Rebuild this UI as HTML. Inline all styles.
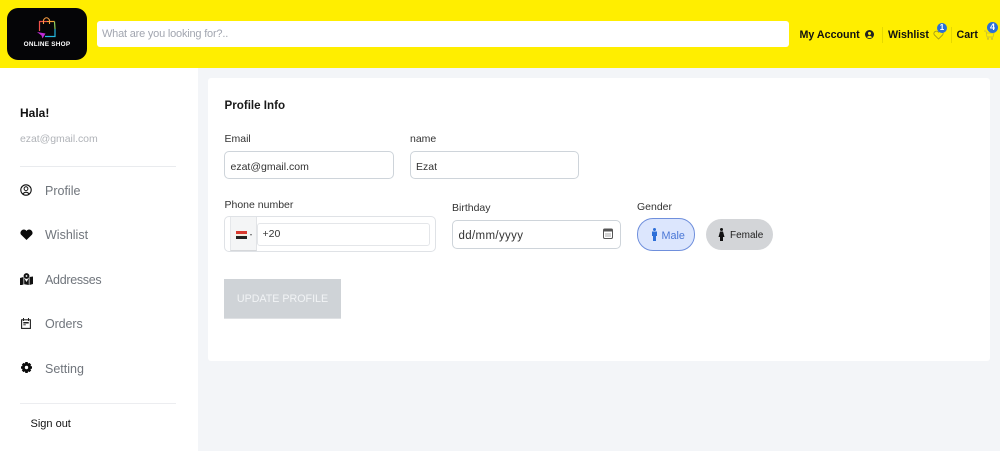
<!DOCTYPE html>
<html>
<head>
<meta charset="utf-8">
<style>
html,body{margin:0;padding:0;background:#fff}
body{width:1000px;height:467px;position:relative;overflow:hidden;font-family:"Liberation Sans",sans-serif;color:#111}
.a{position:absolute;white-space:nowrap}
.box{position:absolute;box-sizing:border-box;background:#fff;border:1px solid #ced4da;border-radius:5px}
.lbl{font-size:10.5px;color:#333;line-height:14px}
.val{font-size:10.5px;color:#333;line-height:14px}
.nav{font-size:12.5px;color:#70757c;line-height:16px;left:45px}
.hd{font-size:10.7px;font-weight:bold;line-height:14px;color:#111}
svg{position:absolute;display:block}
</style>
</head>
<body>
<div class="a" style="left:0;top:0;width:1000px;height:68px;background:#ffee00"></div>
<div class="a" style="left:198px;top:68px;width:802px;height:383px;background:#f3f5f8"></div>

<!-- logo -->
<div class="a" style="left:7px;top:8px;width:80px;height:52px;background:#050507;border-radius:11px"></div>
<svg style="left:34px;top:15px" width="28" height="25" viewBox="0 0 28 25" fill="none">
  <path d="M5.500 16V6.500H13" stroke="#f0504a" stroke-width="1.200"/>
  <path d="M13 6.500H20.500" stroke="#f3a13a" stroke-width="1.200"/>
  <path d="M20.500 6.500L21 14" stroke="#8fcf5a" stroke-width="1.200"/>
  <path d="M21 14V21.500H11" stroke="#25b8e0" stroke-width="1.200"/>
  <path d="M9.500 9V5Q12.500 .5 15.500 5V9" stroke="#f59b42" stroke-width="1.100"/>
  <path d="M3 17L11.500 18.500L8.500 23.500L7.500 20.500Z" fill="#c02bd6"/>
</svg>
<div class="a" style="left:7px;top:40.500px;width:80px;text-align:center;color:#fff;font-size:6.400px;font-weight:bold;letter-spacing:.25px;line-height:8px">ONLINE SHOP</div>

<!-- search -->
<div class="a" style="left:97px;top:21px;width:692px;height:26px;background:#fff;border-radius:3px"></div>
<div class="a" style="left:102px;top:27px;font-size:11px;letter-spacing:-.2px;line-height:15px;color:#a2a6b0">What are you looking for?..</div>

<!-- header right -->
<div class="a hd" style="left:799.500px;top:27.500px">My Account</div>
<svg style="left:865px;top:29.500px" width="9" height="9" viewBox="0 0 10 10"><circle cx="5" cy="5" r="5" fill="#222"/><circle cx="5" cy="3.800" r="1.700" fill="#ffee00"/><path d="M2 8Q5 4.800 8 8Q5 10 2 8Z" fill="#ffee00"/></svg>
<div class="a" style="left:881.500px;top:27px;width:1px;height:16px;background:#e6d800"></div>
<div class="a hd" style="left:888px;top:27.500px">Wishlist</div>
<svg style="left:933px;top:30px" width="11" height="10" viewBox="0 0 11 10" fill="none"><path d="M5.500 9L1.300 4.800C-.5 2.500 3.500-.5 5.500 2.300C7.500-.5 11.500 2.500 9.700 4.800Z" stroke="#9c9420" stroke-width=".8"/></svg>
<div class="a" style="left:937px;top:23px;width:10px;height:10px;border-radius:50%;background:#2a6fd6;color:#fff;font-size:8px;font-weight:bold;text-align:center;line-height:10px">1</div>
<div class="a" style="left:950.500px;top:27px;width:1px;height:16px;background:#e6d800"></div>
<div class="a hd" style="left:956.500px;top:27.500px">Cart</div>
<svg style="left:984px;top:30px" width="11" height="10" viewBox="0 0 11 10" fill="none" stroke="#c2ba3a" stroke-width=".7"><path d="M0 1H2L3 7H9L10 3H2.500"/><circle cx="4" cy="8.700" r=".7"/><circle cx="8" cy="8.700" r=".7"/></svg>
<div class="a" style="left:987px;top:22px;width:11px;height:11px;border-radius:50%;background:#2a6fd6;color:#fff;font-size:9px;font-weight:bold;text-align:center;line-height:11px">4</div>

<!-- sidebar -->
<div class="a" style="left:20px;top:105px;font-size:12px;font-weight:bold;line-height:16px;color:#111">Hala!</div>
<div class="a" style="left:20px;top:132px;font-size:10.500px;letter-spacing:-.05px;line-height:15px;color:#b0b3b8">ezat@gmail.com</div>
<div class="a" style="left:20px;top:166px;width:156px;height:1px;background:#e9ebee"></div>

<svg style="left:20px;top:184px" width="12" height="12" viewBox="0 0 12 12" fill="none"><circle cx="6" cy="6" r="5.200" stroke="#111" stroke-width="1.100"/><circle cx="6" cy="4.700" r="1.900" stroke="#111" stroke-width="1"/><path d="M2.800 9.800Q6 6.600 9.200 9.800" stroke="#111" stroke-width="1.100"/></svg>
<div class="a nav" style="top:182.500px">Profile</div>

<svg style="left:20px;top:228.500px" width="13" height="11" viewBox="0 0 13 11"><path d="M6.500 11L1 5.600C-1.200 2.500 3.800-1.800 6.500 2C9.200-1.800 14.200 2.500 12 5.600Z" fill="#0a0a0a"/></svg>
<div class="a nav" style="top:227px">Wishlist</div>

<svg style="left:20px;top:273px" width="13" height="12" viewBox="0 0 13 12"><path d="M0 5L3.500 4V11.500L0 12.500ZM4.200 5L6.500 9L8.800 5V12L4.200 11.200ZM9.500 4L13 3.500V11L9.500 12Z" fill="#111"/><circle cx="6.500" cy="3" r="2.900" fill="#111"/><circle cx="6.500" cy="3" r=".9" fill="#fff"/></svg>
<div class="a nav" style="top:271.500px;letter-spacing:-.3px">Addresses</div>

<svg style="left:21px;top:318px" width="10" height="11" viewBox="0 0 10 11" fill="none"><rect x=".6" y="1.800" width="8.800" height="8.600" stroke="#222" stroke-width="1.100"/><path d="M2.500 0V3M7.500 0V3" stroke="#222" stroke-width="1"/><rect x="2.300" y="4" width="5.400" height="1.500" fill="#222"/><rect x="2.300" y="6" width="2.500" height="1.400" fill="#777"/></svg>
<div class="a nav" style="top:315.500px;letter-spacing:-.1px">Orders</div>

<svg style="left:21px;top:362px" width="11" height="11" viewBox="0 0 11 11"><path d="M4.300 0H6.700L7 1.500L8.500 .9L10.200 2.700L9.400 4L11 4.400V6.600L9.400 7L10.200 8.400L8.500 10.100L7 9.400L6.700 11H4.300L4 9.400L2.500 10.100L.8 8.400L1.600 7L0 6.600V4.400L1.600 4L.8 2.700L2.500 .9L4 1.500Z" fill="#0a0a0a"/><circle cx="5.500" cy="5.500" r="1.700" fill="#fff"/></svg>
<div class="a nav" style="top:360.500px">Setting</div>

<div class="a" style="left:20px;top:403px;width:156px;height:1px;background:#ecedf0"></div>
<div class="a" style="left:30.500px;top:417px;font-size:11px;line-height:14px;color:#111">Sign out</div>

<!-- card -->
<div class="a" style="left:208px;top:78px;width:782px;height:283px;background:#fff;border-radius:3px"></div>
<div class="a" style="left:224.500px;top:97.500px;font-size:11.600px;font-weight:bold;line-height:15px;color:#1a1a1a">Profile Info</div>

<div class="a lbl" style="left:224.500px;top:132px">Email</div>
<div class="box" style="left:224px;top:151px;width:170px;height:28px"></div>
<div class="a val" style="left:230.500px;top:160px">ezat@gmail.com</div>

<div class="a lbl" style="left:410px;top:132px">name</div>
<div class="box" style="left:410px;top:151px;width:169px;height:28px"></div>
<div class="a val" style="left:416px;top:160px">Ezat</div>

<div class="a lbl" style="left:224.500px;top:198px">Phone number</div>
<div class="box" style="left:224px;top:216px;width:212px;height:36px;border-color:#dfe2e6"></div>
<div class="a" style="left:230px;top:217px;width:27px;height:34px;background:#f4f5f6;border-left:1px solid #e5e7ea;border-right:1px solid #e2e4e7;border-bottom:1px solid #d5d7da;box-sizing:border-box"></div>
<div class="box" style="left:257px;top:222.500px;width:173px;height:23px;border-color:#e4e6e9;border-radius:3px"></div>
<div class="a" style="left:236px;top:231px;width:11px;height:2.500px;background:#d8392f"></div>
<div class="a" style="left:236px;top:233.500px;width:11px;height:2.500px;background:#f3efe2"></div>
<div class="a" style="left:236px;top:236px;width:11px;height:2.500px;background:#222"></div>
<div class="a" style="left:250px;top:234px;width:0;height:0;border-left:1.500px solid transparent;border-right:1.500px solid transparent;border-top:2px solid #666"></div>
<div class="a val" style="left:262.500px;top:227px">+20</div>

<div class="a lbl" style="left:452px;top:201px">Birthday</div>
<div class="box" style="left:452px;top:220px;width:169px;height:29px"></div>
<div class="a val" style="left:458.500px;top:229px;font-size:11.500px;letter-spacing:.35px">dd/mm/yyyy</div>
<svg style="left:603px;top:228px" width="10" height="11" viewBox="0 0 10 11" fill="none"><rect x=".5" y="1" width="9" height="9.500" rx="1.200" stroke="#555"/><rect x=".5" y="1" width="9" height="2.500" fill="#555"/><path d="M2.500 6H3.500M4.500 6H5.500M6.500 6H7.500M2.500 8H3.500M4.500 8H5.500M6.500 8H7.500" stroke="#555"/></svg>

<div class="a lbl" style="left:637px;top:200px">Gender</div>
<div class="a" style="left:637px;top:218px;width:58px;height:33px;box-sizing:border-box;background:#dce6fd;border:1px solid #6f8fdc;border-radius:16px"></div>
<svg style="left:650.500px;top:228px" width="7" height="13" viewBox="0 0 7 13"><circle cx="3.500" cy="1.500" r="1.500" fill="#2d6fd8"/><path d="M1 3.500H6V8H5V13H2V8H1Z" fill="#2d6fd8"/></svg>
<div class="a" style="left:661.500px;top:228.500px;font-size:10.800px;line-height:14px;color:#4a77d6">Male</div>
<div class="a" style="left:706px;top:219px;width:67px;height:31px;background:#d3d5d8;border-radius:16px"></div>
<svg style="left:718px;top:228px" width="7" height="13" viewBox="0 0 7 13"><circle cx="3.500" cy="1.500" r="1.500" fill="#111"/><path d="M2 3.500H5L6.500 9H5V13H2V9H.5Z" fill="#111"/></svg>
<div class="a" style="left:730px;top:228.500px;font-size:10px;line-height:14px;color:#222">Female</div>

<div class="a" style="left:224px;top:279px;width:117px;height:40px;background:#cfd3d7;border-bottom:1px solid #dfe1e4;box-sizing:border-box"></div>
<div class="a" style="left:224px;top:292px;width:117px;text-align:center;font-size:10.700px;line-height:15px;color:#f1f3f5">UPDATE PROFILE</div>
</body>
</html>
